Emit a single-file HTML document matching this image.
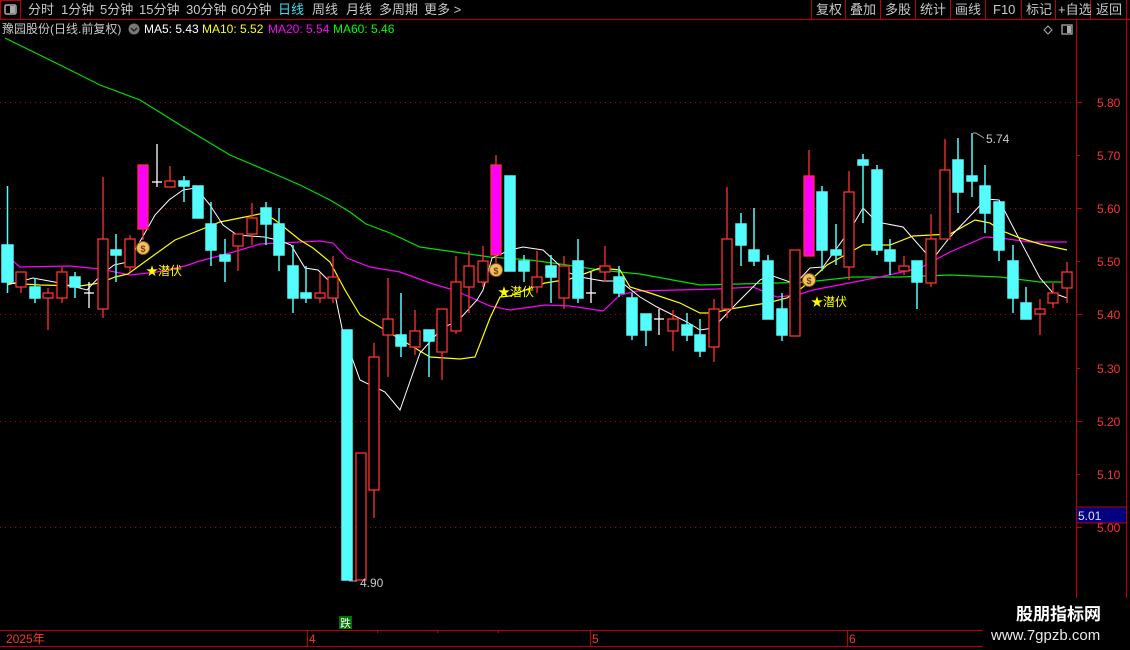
<!DOCTYPE html>
<html><head><meta charset="utf-8"><style>
body{margin:0;background:#000;width:1130px;height:650px;overflow:hidden;font-family:"Liberation Sans","Noto Sans CJK SC",sans-serif;}
svg{position:absolute;left:0;top:0}
</style></head><body>
<svg width="1130" height="650" xmlns="http://www.w3.org/2000/svg" font-family="Liberation Sans, Noto Sans CJK SC, sans-serif">
<rect width="1130" height="650" fill="#000"/>
<!-- top bar -->
<line x1="0" y1="19.5" x2="1130" y2="19.5" stroke="#c00000"/>
<rect x="0.5" y="0.5" width="20" height="19" fill="none" stroke="#c00000"/>
<rect x="5" y="5" width="11" height="9" rx="1.5" fill="none" stroke="#aaa" stroke-width="1.5"/><rect x="10" y="6" width="5" height="7" fill="#aaa"/>
<g font-size="13" fill="#c8c8c8">
<text x="28" y="14">分时</text><text x="61" y="14">1分钟</text><text x="100" y="14">5分钟</text><text x="139" y="14">15分钟</text><text x="186" y="14">30分钟</text><text x="231" y="14">60分钟</text>
<text x="278" y="14" fill="#40e0f0">日线</text><text x="312" y="14">周线</text><text x="346" y="14">月线</text><text x="379" y="14">多周期</text><text x="424" y="14">更多 &gt;</text>
</g>
<g stroke="#c00000"><line x1="811.5" y1="0" x2="811.5" y2="19"/><line x1="845.5" y1="0" x2="845.5" y2="19"/><line x1="880.5" y1="0" x2="880.5" y2="19"/><line x1="915.5" y1="0" x2="915.5" y2="19"/><line x1="950.5" y1="0" x2="950.5" y2="19"/><line x1="985.5" y1="0" x2="985.5" y2="19"/><line x1="1021.5" y1="0" x2="1021.5" y2="19"/><line x1="1055.5" y1="0" x2="1055.5" y2="19"/><line x1="1090.5" y1="0" x2="1090.5" y2="19"/><line x1="1126.5" y1="0" x2="1126.5" y2="650"/></g>
<g font-size="13" fill="#c8c8c8">
<text x="816" y="14">复权</text><text x="850" y="14">叠加</text><text x="885" y="14">多股</text><text x="920" y="14">统计</text><text x="955" y="14">画线</text><text x="993" y="14">F10</text><text x="1026" y="14">标记</text><text x="1058" y="14">+自选</text><text x="1096" y="14">返回</text>
</g>
<!-- info line -->
<g font-size="12">
<text x="2" y="33" fill="#c8c8c8">豫园股份(日线.前复权)</text>
<circle cx="134" cy="29" r="5.5" fill="#777"/><path d="M131 28l3 3 3-3" stroke="#222" stroke-width="1.4" fill="none"/>
<text x="144" y="33" fill="#fff">MA5: 5.43</text>
<text x="202" y="33" fill="#ffff00">MA10: 5.52</text>
<text x="268" y="33" fill="#ff00ff">MA20: 5.54</text>
<text x="333" y="33" fill="#00ff00">MA60: 5.46</text>
</g>
<path d="M1048 26l4 4-4 4-4-4z" fill="none" stroke="#aaa"/>
<rect x="1062" y="25" width="10" height="9" fill="none" stroke="#aaa" stroke-width="1.3"/><rect x="1067" y="26" width="4" height="7" fill="#aaa"/>
<line x1="1076.5" y1="20" x2="1076.5" y2="630" stroke="#c00000"/>
<!-- grid -->
<g stroke="#b00000" stroke-dasharray="1,4"><line x1="0" y1="102.5" x2="1075" y2="102.5"/><line x1="0" y1="208.5" x2="1075" y2="208.5"/><line x1="0" y1="314.5" x2="1075" y2="314.5"/><line x1="0" y1="421.5" x2="1075" y2="421.5"/><line x1="0" y1="527.5" x2="1075" y2="527.5"/></g>
<g stroke="#c00000"><line x1="1076" y1="102.5" x2="1082" y2="102.5"/><line x1="1076" y1="155.5" x2="1080" y2="155.5"/><line x1="1076" y1="208.5" x2="1082" y2="208.5"/><line x1="1076" y1="261.5" x2="1080" y2="261.5"/><line x1="1076" y1="314.5" x2="1082" y2="314.5"/><line x1="1076" y1="368.5" x2="1080" y2="368.5"/><line x1="1076" y1="421.5" x2="1082" y2="421.5"/><line x1="1076" y1="474.5" x2="1080" y2="474.5"/><line x1="1076" y1="527.5" x2="1082" y2="527.5"/></g>
<g font-size="12" fill="#ff3232"><text x="1097" y="107">5.80</text><text x="1097" y="160">5.70</text><text x="1097" y="213">5.60</text><text x="1097" y="266">5.50</text><text x="1097" y="319">5.40</text><text x="1097" y="373">5.30</text><text x="1097" y="426">5.20</text><text x="1097" y="479">5.10</text><text x="1097" y="532">5.00</text></g>
<rect x="1076.5" y="507" width="50" height="16" fill="#000080" stroke="#c00000"/>
<text x="1078" y="520" font-size="12" fill="#e0e0e0">5.01</text>
<!-- MA lines -->
<polyline fill="none" stroke="#00e000" stroke-width="1.2" points="5,38 60,65 100,85 140,100 185,128 230,155 270,172 300,185 330,200 350,212 366,224 390,233 420,247 455,252 490,257 530,260 560,264 600,270 640,274 700,285 777,283 807,282 853,277 900,277 950,275 1000,277 1040,282 1067,282"/>
<polyline fill="none" stroke="#ff00ff" stroke-width="1.2" points="7,256 20,267 70,266 100,269 130,275 157,272 185,266 200,261 230,253 260,244 320,241 333,243 347,258 370,267 400,272 430,283 450,289 470,297 490,306 510,310 545,305 570,306 603,311 620,295 637,291 717,289 753,287 777,297 797,295 813,290 880,277 920,268 950,252 985,237 1000,238 1030,242 1067,242"/>
<polyline fill="none" stroke="#ffff00" stroke-width="1.2" points="7,283 40,285 80,286 100,283 115,277 128,274 150,258 175,240 200,230 220,222 250,216 264,213 275,220 300,240 313,248 330,262 345,290 360,315 385,330 410,345 430,357 460,359 475,357 490,318 500,297 510,296 528,289 545,283 570,279 600,268 620,270 630,287 650,293 680,303 700,313 713,313 730,309 767,303 787,298 803,287 827,265 863,245 890,245 913,236 950,234 975,220 990,223 1000,230 1020,238 1040,244 1067,250"/>
<polyline fill="none" stroke="#ffffff" stroke-width="1" points="7,285 33,278 60,283 87,290 101,275 114,265 128,262 142,238 155,215 169,200 183,190 196,188 210,205 223,225 237,235 264,237 278,240 291,245 305,268 318,270 333,285 343,333 360,380 385,392 400,410 407,390 420,353 443,327 457,322 477,300 483,290 492,258 510,250 523,247 543,250 557,263 567,272 580,277 603,281 620,281 640,297 657,307 687,322 700,330 713,328 737,303 760,280 770,275 790,282 797,282 810,268 823,267 850,230 863,208 877,222 903,227 932,260 950,237 973,213 986,199 999,200 1013,227 1040,278 1053,293 1067,298"/>
<!-- candles -->
<g stroke-width="1.5">
<g stroke="#54fcfc" fill="#54fcfc">
<line x1="7.5" y1="186" x2="7.5" y2="293"/><rect x="2" y="245" width="11" height="37"/>
<line x1="35" y1="278" x2="35" y2="303"/><rect x="30" y="287" width="10" height="11"/>
<line x1="75" y1="272" x2="75" y2="298"/><rect x="70" y="277" width="10" height="10"/>
<line x1="116" y1="234" x2="116" y2="282"/><rect x="111" y="250" width="10" height="5"/>
<line x1="184" y1="176" x2="184" y2="202"/><rect x="179" y="181" width="10" height="5"/>
<rect x="193" y="186" width="10" height="32"/>
<line x1="211" y1="202" x2="211" y2="266"/><rect x="206" y="224" width="10" height="26"/>
<line x1="225" y1="239" x2="225" y2="282"/><rect x="220" y="255" width="10" height="6"/>
<line x1="266" y1="202" x2="266" y2="245"/><rect x="261" y="208" width="10" height="16"/>
<line x1="279" y1="208" x2="279" y2="271"/><rect x="274" y="224" width="10" height="31"/>
<line x1="293" y1="245" x2="293" y2="313"/><rect x="288" y="266" width="10" height="32"/>
<line x1="306" y1="266" x2="306" y2="303"/><rect x="301" y="293" width="10" height="5"/>
<rect x="342" y="330" width="10" height="250"/>
<line x1="401" y1="293" x2="401" y2="357"/><rect x="396" y="335" width="10" height="11"/>
<line x1="429" y1="330" x2="429" y2="377"/><rect x="424" y="330" width="10" height="11"/>
<rect x="505" y="176" width="10" height="95"/>
<line x1="524" y1="255" x2="524" y2="282"/><rect x="519" y="261" width="10" height="10"/>
<line x1="551" y1="255" x2="551" y2="303"/><rect x="546" y="266" width="10" height="11"/>
<line x1="578" y1="239" x2="578" y2="303"/><rect x="573" y="261" width="10" height="37"/>
<line x1="619" y1="266" x2="619" y2="297"/><rect x="614" y="277" width="10" height="16"/>
<line x1="632" y1="293" x2="632" y2="340"/><rect x="627" y="298" width="10" height="37"/>
<line x1="646" y1="314" x2="646" y2="346"/><rect x="641" y="314" width="10" height="16"/>
<line x1="687" y1="313" x2="687" y2="341"/><rect x="682" y="325" width="10" height="10"/>
<line x1="700" y1="319" x2="700" y2="357"/><rect x="695" y="335" width="10" height="16"/>
<line x1="741" y1="213" x2="741" y2="266"/><rect x="736" y="224" width="10" height="21"/>
<line x1="754" y1="208" x2="754" y2="266"/><rect x="749" y="250" width="10" height="11"/>
<line x1="768" y1="255" x2="768" y2="319"/><rect x="763" y="261" width="10" height="58"/>
<line x1="782" y1="293" x2="782" y2="341"/><rect x="777" y="309" width="10" height="26"/>
<line x1="822" y1="186" x2="822" y2="271"/><rect x="817" y="192" width="10" height="58"/>
<line x1="836" y1="224" x2="836" y2="265"/><rect x="831" y="250" width="10" height="5"/>
<line x1="863" y1="154" x2="863" y2="223"/><rect x="858" y="160" width="10" height="5"/>
<line x1="877" y1="165" x2="877" y2="255"/><rect x="872" y="170" width="10" height="80"/>
<line x1="890" y1="239" x2="890" y2="275"/><rect x="885" y="250" width="10" height="11"/>
<line x1="917" y1="261" x2="917" y2="309"/><rect x="912" y="261" width="10" height="21"/>
<line x1="958" y1="138" x2="958" y2="213"/><rect x="953" y="160" width="10" height="32"/>
<line x1="972" y1="133" x2="972" y2="197"/><rect x="967" y="176" width="10" height="5"/>
<line x1="985" y1="165" x2="985" y2="233"/><rect x="980" y="186" width="10" height="27"/>
<line x1="999" y1="202" x2="999" y2="261"/><rect x="994" y="202" width="10" height="48"/>
<line x1="1013" y1="245" x2="1013" y2="313"/><rect x="1008" y="261" width="10" height="37"/>
<line x1="1026" y1="287" x2="1026" y2="319"/><rect x="1021" y="303" width="10" height="16"/>
</g>
<g stroke="#ff3232" fill="#000" stroke-width="1.3">
<line x1="21" y1="272" x2="21" y2="293"/><rect x="16" y="272" width="10" height="15"/>
<line x1="48" y1="288" x2="48" y2="330"/><rect x="43" y="293" width="10" height="5"/>
<line x1="62" y1="267" x2="62" y2="303"/><rect x="57" y="272" width="10" height="26"/>
<line x1="103" y1="177" x2="103" y2="318"/><rect x="98" y="239" width="10" height="70"/>
<line x1="130" y1="235" x2="130" y2="272"/><rect x="125" y="239" width="10" height="28"/>
<line x1="170" y1="166" x2="170" y2="187"/><rect x="165" y="181" width="10" height="6"/>
<line x1="238" y1="234" x2="238" y2="271"/><rect x="233" y="234" width="10" height="12"/>
<line x1="252" y1="203" x2="252" y2="245"/><rect x="247" y="218" width="10" height="16"/>
<line x1="320" y1="273" x2="320" y2="303"/><rect x="315" y="293" width="10" height="5"/>
<line x1="333" y1="256" x2="333" y2="303"/><rect x="328" y="277" width="10" height="21"/>
<rect x="356" y="453" width="10" height="127"/>
<line x1="374" y1="343" x2="374" y2="518"/><rect x="369" y="357" width="10" height="133"/>
<line x1="388" y1="278" x2="388" y2="377"/><rect x="383" y="319" width="10" height="16"/>
<line x1="415" y1="310" x2="415" y2="355"/><rect x="410" y="331" width="10" height="16"/>
<line x1="442" y1="309" x2="442" y2="380"/><rect x="437" y="309" width="10" height="43"/>
<line x1="456" y1="256" x2="456" y2="334"/><rect x="451" y="282" width="10" height="49"/>
<line x1="469" y1="251" x2="469" y2="313"/><rect x="464" y="266" width="10" height="21"/>
<line x1="483" y1="246" x2="483" y2="287"/><rect x="478" y="261" width="10" height="21"/>
<line x1="537" y1="251" x2="537" y2="293"/><rect x="532" y="277" width="10" height="10"/>
<line x1="564" y1="256" x2="564" y2="309"/><rect x="559" y="266" width="10" height="32"/>
<line x1="605" y1="246" x2="605" y2="282"/><rect x="600" y="266" width="10" height="6"/>
<line x1="673" y1="310" x2="673" y2="351"/><rect x="668" y="319" width="10" height="12"/>
<line x1="714" y1="299" x2="714" y2="362"/><rect x="709" y="309" width="10" height="38"/>
<line x1="727" y1="187" x2="727" y2="318"/><rect x="722" y="239" width="10" height="70"/>
<rect x="790" y="250" width="10" height="86"/>
<line x1="849" y1="171" x2="849" y2="280"/><rect x="844" y="192" width="10" height="75"/>
<line x1="904" y1="256" x2="904" y2="275"/><rect x="899" y="266" width="10" height="5"/>
<line x1="931" y1="214" x2="931" y2="287"/><rect x="926" y="239" width="10" height="44"/>
<line x1="945" y1="139" x2="945" y2="170"/><rect x="940" y="170" width="10" height="69"/>
<line x1="1040" y1="299" x2="1040" y2="335"/><rect x="1035" y="309" width="10" height="5"/>
<line x1="1053" y1="283" x2="1053" y2="308"/><rect x="1048" y="293" width="10" height="10"/>
<line x1="1067" y1="262" x2="1067" y2="303"/><rect x="1062" y="272" width="10" height="16"/>
</g>
<g stroke="#ff3232" fill="#ff00ff" stroke-width="1.3">
<line x1="143" y1="229" x2="143" y2="240"/><rect x="138" y="165" width="10" height="64"/>
<line x1="496" y1="155" x2="496" y2="265"/><rect x="491" y="165" width="10" height="90"/>
<line x1="809" y1="150" x2="809" y2="256"/><rect x="804" y="176" width="10" height="80"/>
</g>
<g stroke="#fff" stroke-width="1.3">
<line x1="89" y1="282" x2="89" y2="308"/><line x1="84" y1="293" x2="94" y2="293"/>
<line x1="157" y1="144" x2="157" y2="187"/><line x1="152" y1="182" x2="162" y2="182"/>
<line x1="591" y1="272" x2="591" y2="303"/><line x1="586" y1="293" x2="596" y2="293"/>
<line x1="659" y1="309" x2="659" y2="335"/><line x1="654" y1="319" x2="664" y2="319"/>
</g>
</g>
<!-- markers -->
<g>
<circle cx="143" cy="248" r="6.5" fill="#f0c060" stroke="#8a5a10"/><text x="143" y="252" font-size="9" text-anchor="middle" fill="#7a3a10" font-weight="bold">$</text>
<circle cx="496" cy="270" r="6.5" fill="#f0c060" stroke="#8a5a10"/><text x="496" y="274" font-size="9" text-anchor="middle" fill="#7a3a10" font-weight="bold">$</text>
<circle cx="809" cy="280" r="6.5" fill="#f0c060" stroke="#8a5a10"/><text x="809" y="284" font-size="9" text-anchor="middle" fill="#7a3a10" font-weight="bold">$</text>
</g>
<g font-size="12" fill="#ffff00"><text x="146" y="275">★潜伏</text><text x="498" y="296">★潜伏</text><text x="811" y="306">★潜伏</text></g>
<text x="986" y="143" font-size="12" fill="#c8c8c8">5.74</text>
<path d="M973 133h3l8 5" stroke="#aaa" fill="none"/>
<text x="360" y="587" font-size="12" fill="#c8c8c8">4.90</text>
<path d="M349 581h8" stroke="#aaa"/>
<rect x="339" y="616" width="13" height="13" fill="#007000"/>
<text x="340" y="627" font-size="11" fill="#fff">跌</text>
<!-- bottom axis -->
<line x1="0" y1="630.5" x2="1130" y2="630.5" stroke="#c00000"/>
<line x1="0" y1="646.5" x2="1130" y2="646.5" stroke="#c00000"/>
<g stroke="#c00000"><line x1="307.5" y1="630" x2="307.5" y2="646"/><line x1="590.5" y1="630" x2="590.5" y2="646"/><line x1="847.5" y1="630" x2="847.5" y2="646"/><line x1="377.5" y1="630" x2="377.5" y2="633"/><line x1="437.5" y1="630" x2="437.5" y2="633"/><line x1="498.5" y1="630" x2="498.5" y2="633"/></g>
<g font-size="12" fill="#ff3232"><text x="6" y="643">2025年</text><text x="309" y="643">4</text><text x="592" y="643">5</text><text x="849" y="643">6</text></g>
<!-- watermark -->
<rect x="983" y="598" width="147" height="52" fill="#000"/>
<text x="1016" y="620" font-size="17" font-weight="bold" fill="#fff">股朋指标网</text>
<text x="991" y="640" font-size="15" fill="#e8e8e8">www.7gpzb.com</text>
</svg>
</body></html>
